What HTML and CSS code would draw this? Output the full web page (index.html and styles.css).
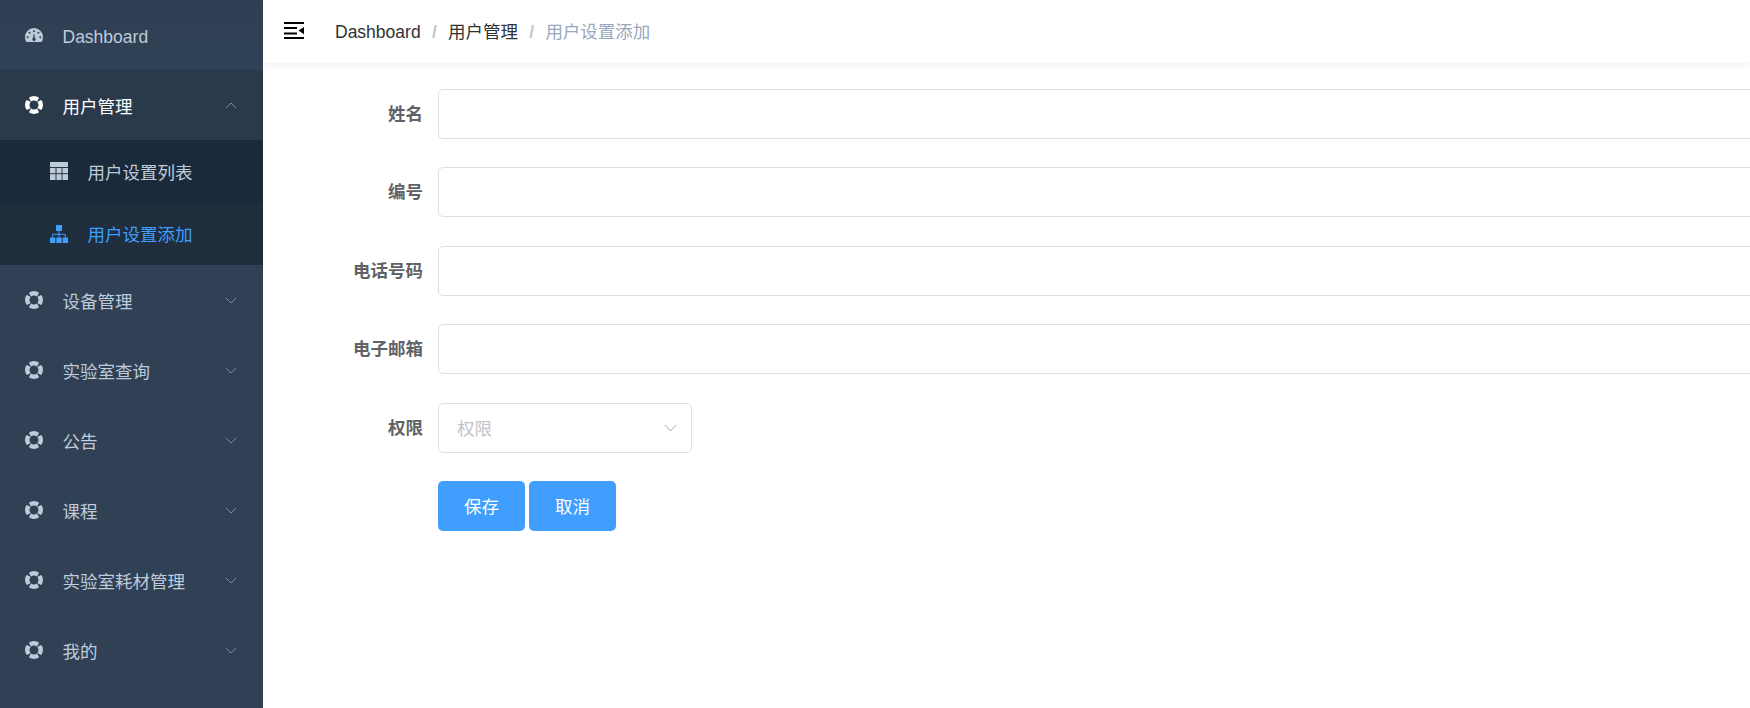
FILE: index.html
```html
<!DOCTYPE html>
<html lang="zh-CN">
<head>
<meta charset="utf-8">
<title>用户设置添加</title>
<link rel="stylesheet" href="styles.css">
</head>
<body>
<svg class="defs" width="0" height="0" aria-hidden="true">
  <symbol id="help" viewBox="0 0 18 18">
    <path fill-rule="evenodd" d="M9 0a9 9 0 1 0 0 18A9 9 0 0 0 9 0zm0 4.500a4.500 4.500 0 1 1 0 9 4.500 4.500 0 0 1 0-9z"/>
    <path class="gap" d="M0 3L3 0L6.300 6.300zM18 3L15 0L11.700 6.300zM0 15L3 18L6.300 11.700zM18 15L15 18L11.700 11.700z"/>
  </symbol>
  <symbol id="chev" viewBox="0 0 12 7">
    <path d="M.7.7L6 6l5.300-5.300" fill="none" stroke="currentColor" stroke-width="1"/>
  </symbol>
</svg>
<div class="app">
  <aside class="sidebar">
    <ul class="menu">
      <li class="item dash">
        <svg class="icon" viewBox="0 0 18 14"><path fill="currentColor" fill-rule="evenodd" d="M9 0a9 9 0 0 0-9 9c0 1.800.5 3.500 1.400 4.900h15.200A9 9 0 0 0 18 9a9 9 0 0 0-9-9zM9 2.200a1 1 0 1 1 0 2 1 1 0 0 1 0-2zM4.600 3.800a1 1 0 1 1 0 2 1 1 0 0 1 0-2zM2.700 8.200a1 1 0 1 1 0 2 1 1 0 0 1 0-2zM15.300 8.200a1 1 0 1 1 0 2 1 1 0 0 1 0-2zM13.400 3.800a1 1 0 1 1 0 2 1 1 0 0 1 0-2zM9.300 6l.6 4.100a1.600 1.600 0 1 1-1.800 0l.6-4.100z"/></svg>
        <span class="latin">Dashboard</span>
      </li>
      <li class="item open">
        <svg class="icon"><use href="#help"/></svg>
        <span>用户管理</span>
        <svg class="chev up"><use href="#chev"/></svg>
      </li>
      <li class="sub first">
        <svg class="subicon" viewBox="0 0 18 18"><path fill="currentColor" d="M0 0h18v18H0z"/><path fill="none" stroke="#1b2a3b" stroke-width=".9" d="M0 5.500h18M0 11.700h18M6 5.500V18M12 5.500V18"/></svg>
        <span>用户设置列表</span>
      </li>
      <li class="sub active">
        <svg class="subicon" viewBox="0 0 18 18"><path fill="currentColor" d="M6 0h6v6H6zM0 12.500h5.400V18H0zM6.300 12.500h5.400V18H6.300zM12.600 12.500H18V18h-5.400z"/><path fill="none" stroke="currentColor" stroke-width="1" d="M9 6v6.500M2.700 12.500V9.300h12.600v3.200"/></svg>
        <span>用户设置添加</span>
      </li>
      <li class="item"><svg class="icon"><use href="#help"/></svg><span>设备管理</span><svg class="chev"><use href="#chev"/></svg></li>
      <li class="item"><svg class="icon"><use href="#help"/></svg><span>实验室查询</span><svg class="chev"><use href="#chev"/></svg></li>
      <li class="item"><svg class="icon"><use href="#help"/></svg><span>公告</span><svg class="chev"><use href="#chev"/></svg></li>
      <li class="item"><svg class="icon"><use href="#help"/></svg><span>课程</span><svg class="chev"><use href="#chev"/></svg></li>
      <li class="item"><svg class="icon"><use href="#help"/></svg><span>实验室耗材管理</span><svg class="chev"><use href="#chev"/></svg></li>
      <li class="item"><svg class="icon"><use href="#help"/></svg><span>我的</span><svg class="chev"><use href="#chev"/></svg></li>
    </ul>
  </aside>
  <main class="main">
    <header class="navbar">
      <svg class="hamburger" viewBox="0 0 20 17"><path d="M0 0h20v2H0zM0 5h13v2H0zM0 10.500h13v2H0zM0 15h20v2H0zM14.500 8.600L20 5v7.200z"/></svg>
      <nav class="crumbs">
        <span class="crumb">Dashboard</span><span class="sep">/</span>
        <span class="crumb">用户管理</span><span class="sep">/</span>
        <span class="crumb last">用户设置添加</span>
      </nav>
    </header>
    <form class="form">
      <div class="row"><label class="label">姓名</label><div class="input"></div></div>
      <div class="row"><label class="label">编号</label><div class="input"></div></div>
      <div class="row"><label class="label">电话号码</label><div class="input"></div></div>
      <div class="row"><label class="label">电子邮箱</label><div class="input"></div></div>
      <div class="row">
        <label class="label">权限</label>
        <div class="select"><span>权限</span><svg class="selchev"><use href="#chev"/></svg></div>
      </div>
      <div class="row actions">
        <button type="button" class="btn">保存</button>
        <button type="button" class="btn">取消</button>
      </div>
    </form>
  </main>
</div>
</body>
</html>
```

FILE: styles.css
```css
* { box-sizing: border-box; }
html, body { margin: 0; height: 100%; overflow: hidden; background: #fff; }
body { font-family: "Liberation Sans", "Noto Sans CJK SC", sans-serif; font-size: 17.5px; }
.defs { display: block; height: 0; }
.gap { fill: var(--gap, #304156); stroke: none; }

.app { display: flex; height: 708px; }

.sidebar { width: 263px; flex: none; background: #304156; }
.menu { list-style: none; margin: 0; padding: 0; }
.item {
  height: 70px; display: flex; align-items: center;
  padding-left: 25px; padding-right: 26px;
  color: #bfcbd9; --gap: #304156;
}
.dash { background: linear-gradient(#2f3f53, #304257); }
.latin { margin-top: 4px; }
.open { background: #2b3a4a; color: #fff; --gap: #2b3a4a; }
.icon { width: 18px; height: 18px; margin-right: 19.5px; flex: none; fill: currentColor; }
.dash .icon { height: 14px; }
.chev { width: 12px; height: 7px; margin-left: auto; color: #7f8a98; }
.chev.up { transform: rotate(180deg); }

.sub {
  height: 62.5px; display: flex; align-items: center;
  padding-left: 50px; color: #bfcbd9; background: #1f2d3d;
}
.sub.first { background: #1b2a3b; }
.sub.active { color: #409eff; }
.subicon { width: 18px; height: 18px; margin-right: 19.5px; flex: none; }

.main { flex: 1; min-width: 0; overflow: hidden; }
.navbar {
  height: 62.5px; display: flex; align-items: center;
  box-shadow: 0 2px 8px rgba(0, 21, 41, .06);
}
.hamburger { width: 20px; height: 17px; margin-left: 21px; margin-top: -1px; flex: none; }
.crumbs { margin: -2px 0 0 31px; display: flex; align-items: baseline; color: #303133; }
.sep { color: #c0c4cc; margin: 0 11.25px; font-weight: 700; }
.last { color: #97a8be; }

.form { padding: 26.5px 0 0 50px; width: 1600px; }
.row { display: flex; height: 50px; margin-bottom: 28.4px; align-items: stretch; }
.label {
  width: 125px; padding: 0 15px 3px 0; flex: none;
  display: flex; align-items: center; justify-content: flex-end;
  font-weight: 700; color: #606266;
}
.input { flex: 1; border: 1px solid #dcdfe6; border-radius: 5px; background: #fff; }
.select {
  width: 254px; border: 1px solid #dcdfe6; border-radius: 5px;
  display: flex; align-items: center; justify-content: space-between;
  padding: 0 14px 0 18px; color: #c0c4cc;
}
.selchev { width: 13px; height: 8px; color: #c0c4cc; }
.actions { padding-left: 125px; gap: 4px; }
.btn {
  width: 87px; border: 0; border-radius: 5px; background: #409eff; color: #fff;
  font: inherit; padding: 0;
}
```
